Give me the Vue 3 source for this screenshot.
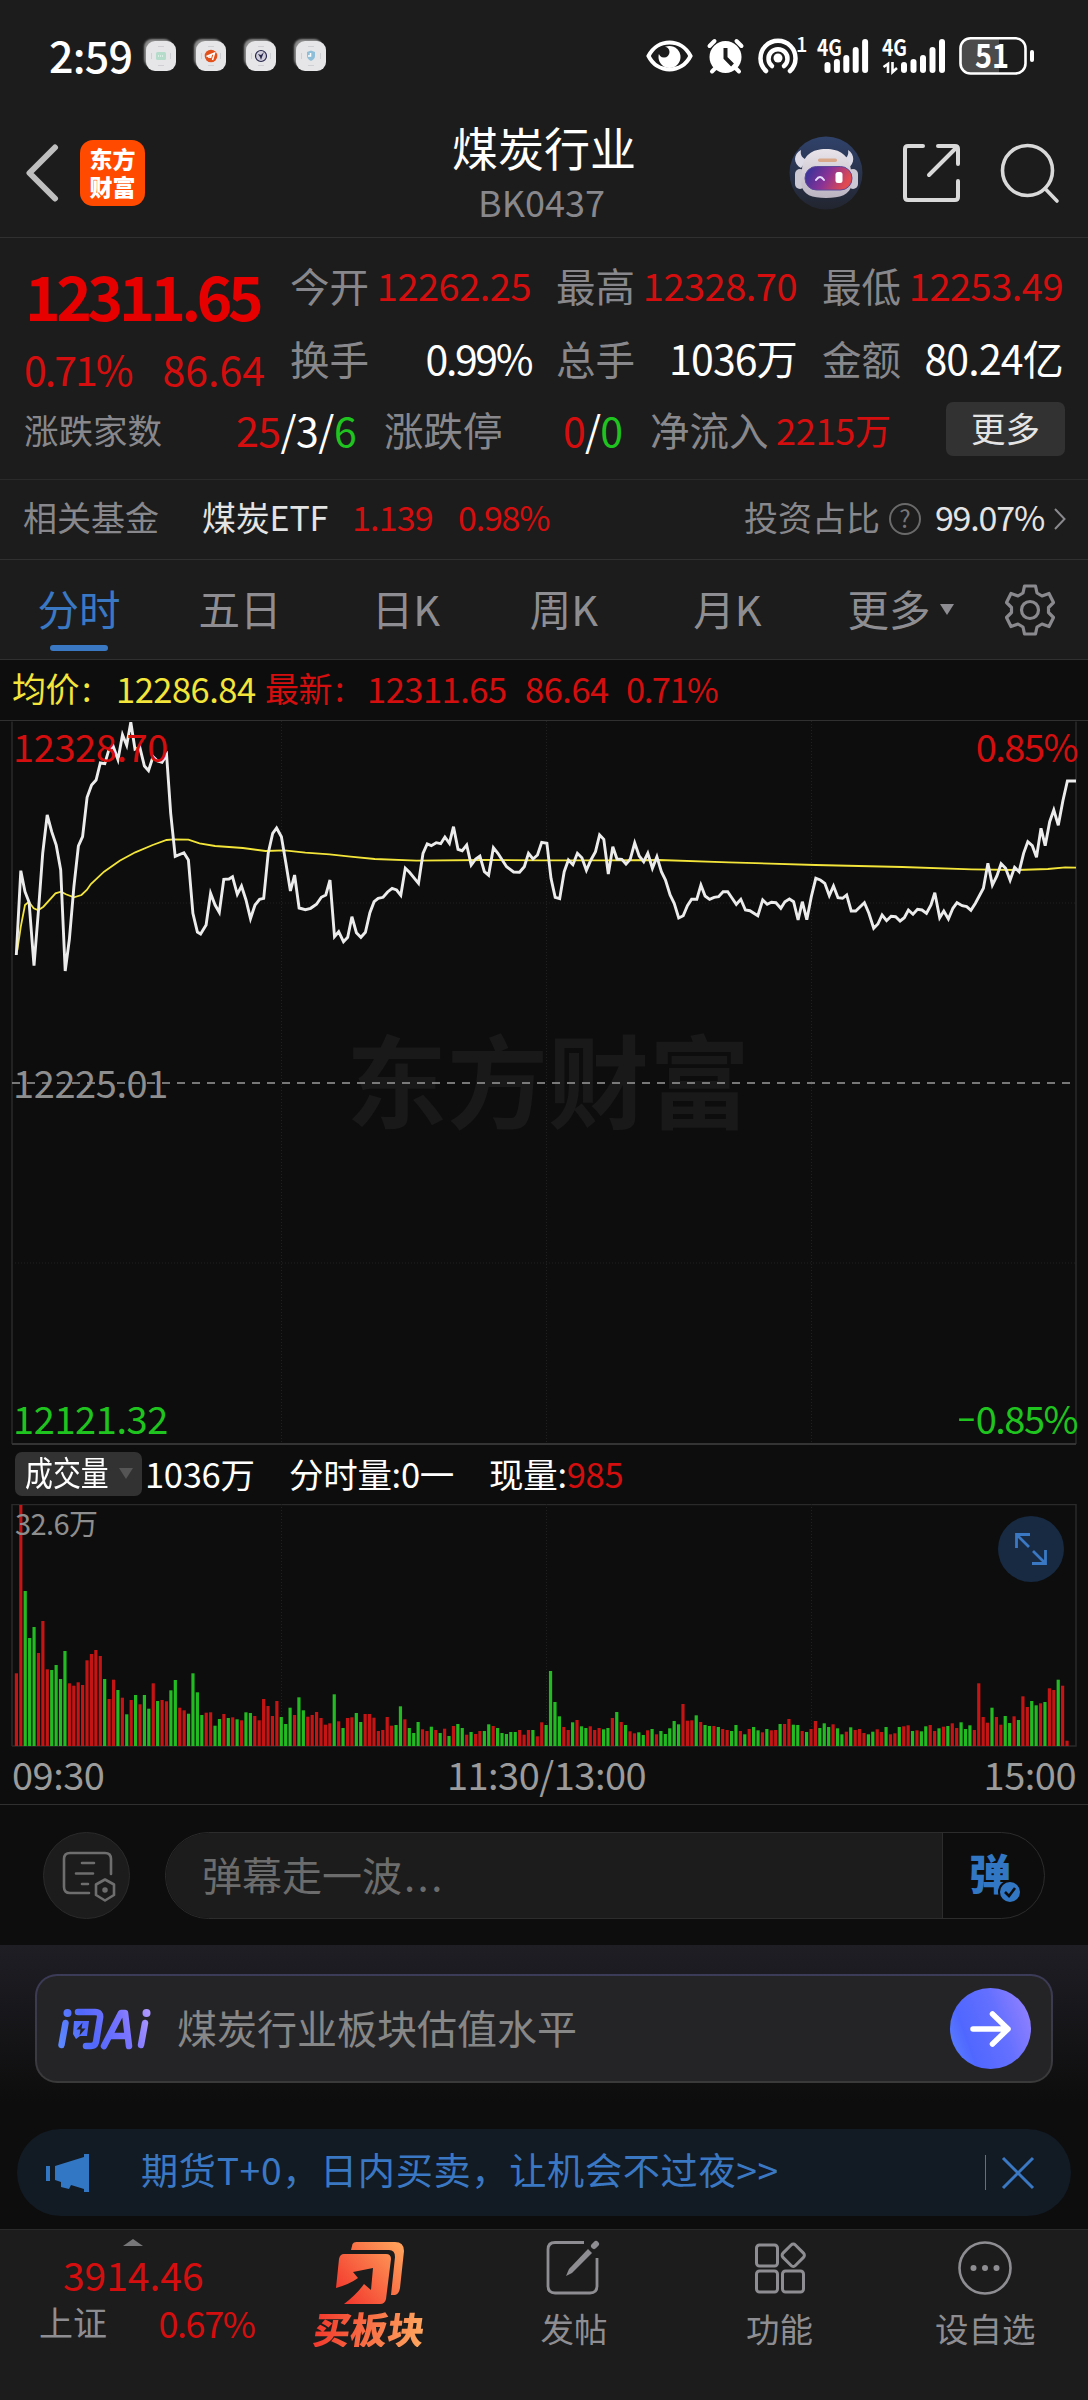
<template>
  <div class="page">
    <!-- system status bar -->
    <div class="status-bar">
      <span class="clock">2:59</span>
      <div class="notices">
        <span v-for="n in notices" :key="n" class="notice">
          <svg viewBox="0 0 30 30" width="30" height="30">
            <path d="M12 5.500h6M12 24.500h6M5.500 12v6M24.500 12v6" stroke="#cfd0d4" stroke-width="1" />
            <template v-if="n === 'chat'">
              <rect x="10" y="11" width="10" height="8" rx="1.500" fill="#b5dccb" />
              <path d="M12 15h6" stroke="#fff" stroke-width="1" stroke-dasharray="1 1" />
            </template>
            <template v-else-if="n === 'quote'">
              <circle cx="15" cy="15" r="6.300" fill="#e2501c" />
              <path d="M10.500 15.500l8-3.500-2 7M13 14v3M15.500 13l-1 4" stroke="#fff" stroke-width="1.500" fill="none" />
            </template>
            <template v-else-if="n === 'compass'">
              <circle cx="15" cy="15" r="5.500" fill="#d0cddb" stroke="#25264a" stroke-width="1.200" />
              <path d="M12 13l3 1 3-3-2 5-1 3-1-3z" fill="#25264a" />
            </template>
            <template v-else>
              <path d="M11 11l4-1.500 4 1.500v4q0 3-4 5-4-2-4-5z" fill="#8fbfd8" />
              <path d="M12 15h2.500v-3" stroke="#fff" stroke-width="1.500" fill="none" />
            </template>
          </svg>
        </span>
      </div>
      <svg class="status-icons" width="396" height="64" viewBox="642 24 396 64" fill="none" stroke="#fff">
        <path d="M648.500 56c9-18 33-18 42 0-9 18-33 18-42 0z" stroke-width="4" />
        <circle cx="669.500" cy="57" r="11" fill="#fff" stroke="none" />
        <circle cx="664" cy="52" r="5.500" fill="#1c1c1c" stroke="none" />
        <circle cx="725.500" cy="57" r="16" fill="#fff" stroke="none" />
        <path d="M725.500 48v10l7 7" stroke="#1c1c1c" stroke-width="4" />
        <path d="M709.500 46l5-5M741.500 46l-5-5M712 71.500l4-4M739 71.500l-4-4" stroke-width="4" stroke-linecap="round" />
        <path d="M766 71a17.500 17.500 0 1 1 24 0" stroke-width="4.500" stroke-linecap="round" />
        <path d="M772 66a9.500 9.500 0 1 1 12 0" stroke-width="4.500" stroke-linecap="round" />
        <circle cx="778" cy="58" r="4.500" fill="#fff" stroke="none" />
        <g stroke-width="6" stroke-linecap="round">
          <path v-for="(b, i) in signal" :key="'a' + i" :d="`M${827.5 + i * 9.4} ${b}V70`" />
          <path v-for="(b, i) in signal" :key="'b' + i" :d="`M${904 + i * 9.5} ${b}V70`" />
        </g>
        <path d="M883.500 67l4.500-3v9M897 68l-4.500 4v-10" stroke-width="2.600" />
        <g class="svg-text" fill="#fff" stroke="none">
          <text x="796" y="52" font-size="20" font-weight="500">1</text>
          <text x="817" y="56" font-size="23" font-weight="700" textLength="25" lengthAdjust="spacingAndGlyphs">4G</text>
          <text x="882" y="56" font-size="23" font-weight="700" textLength="25" lengthAdjust="spacingAndGlyphs">4G</text>
        </g>
        <path d="M970 39h29v34h-29q-9 0-9-9v-16q0-9 9-9z" fill="#4b4b4b" stroke="none" />
        <rect x="960.500" y="38.200" width="65" height="35.300" rx="10" stroke-width="2.600" />
        <path d="M1032 52v8" stroke-width="4" stroke-linecap="round" />
        <text class="svg-text" x="975" y="68" font-size="33" font-weight="700" fill="#fff" stroke="none" textLength="34" lengthAdjust="spacingAndGlyphs">51</text>
      </svg>
    </div>

    <header class="nav">
      <svg class="back" width="34" height="60" viewBox="0 0 34 60">
        <path d="M30 4.500L4.500 30 30 55.500" fill="none" stroke="#bfbfbf" stroke-width="6" stroke-linecap="round" stroke-linejoin="round" />
      </svg>
      <div class="brand"><span>东方</span><span>财富</span></div>
      <div class="title">
        <h1>煤炭行业</h1>
        <p>BK0437</p>
      </div>
      <svg class="robot" width="74" height="74" viewBox="0 0 74 74">
        <defs>
          <linearGradient id="robotBg" x1="0" y1="0" x2="0" y2="1">
            <stop offset="0" stop-color="#30426b" />
            <stop offset="1" stop-color="#22252f" />
          </linearGradient>
          <linearGradient id="visor" x1="0" y1="0" x2="1" y2="0.300">
            <stop offset="0" stop-color="#28349a" />
            <stop offset="0.550" stop-color="#8a3296" />
            <stop offset="1" stop-color="#e04a50" />
          </linearGradient>
          <linearGradient id="helmet" x1="0" y1="0" x2="0" y2="1">
            <stop offset="0" stop-color="#e9e4ea" />
            <stop offset="1" stop-color="#b9b4c0" />
          </linearGradient>
        </defs>
        <circle cx="37" cy="37" r="36.500" fill="url(#robotBg)" />
        <path d="M12 14c-8 4-8 14 0 18l6-8c-5-2-7-5-6-10zM59 14c7 4 7 14 0 18l-6-8c5-2 7-5 6-10z" fill="#dcdbe6" />
        <rect x="6" y="33" width="10" height="20" rx="5" fill="#cdc9d4" />
        <rect x="59" y="33" width="10" height="20" rx="5" fill="#cdc9d4" />
        <path d="M13 34c1-15 10-21 24-21s23 6 25 21l1 14c-2 11-12 14-26 14s-23-3-25-14z" fill="url(#helmet)" />
        <rect x="16" y="30.500" width="47" height="23.500" rx="11.500" fill="url(#visor)" stroke="#5b4a9b" />
        <rect x="29" y="22.500" width="19" height="3.500" rx="1.700" fill="#d9a789" />
        <path d="M27 44q4-6 8 0" fill="none" stroke="#e6dcff" stroke-width="2" stroke-linecap="round" />
        <rect x="46.500" y="36" width="7" height="11" rx="2.500" fill="#fff" />
      </svg>
      <svg class="share" width="60" height="62" viewBox="0 0 60 62" fill="none" stroke="#d9d9d9" stroke-width="4" stroke-linecap="round">
        <path d="M22 4H7Q4 4 4 7v48q0 3 3 3h47q3 0 3-3V39" />
        <path d="M37 4h17q3 0 3 3v15M56 5L28 33" />
      </svg>
      <svg class="search" width="62" height="62" viewBox="0 0 62 62" fill="none" stroke="#d9d9d9" stroke-width="3.600" stroke-linecap="round">
        <circle cx="28.500" cy="28.500" r="25" />
        <path d="M46 46.500l12 12.500" />
      </svg>
    </header>

    <section class="quote">
      <div class="quote-top">
        <div class="price-col">
          <div class="price">12311.65</div>
          <div class="change"><span class="rate">0.71%</span><span>86.64</span></div>
        </div>
        <div class="stats">
          <div v-for="s in stats" :key="s.label" class="stat">
            <span class="label">{{ s.label }}</span>
            <span :class="['value', s.cls]">{{ s.value }}</span>
          </div>
        </div>
      </div>
      <div class="quote-bottom">
        <span class="label l1">涨跌家数</span>
        <span class="n n1"><i class="up">25</i>/3/<i class="down">6</i></span>
        <span class="label l2">涨跌停</span>
        <span class="n n2"><i class="up">0</i>/<i class="down">0</i></span>
        <span class="label l3">净流入</span>
        <span class="n3 up">2215万</span>
        <button class="more">更多</button>
      </div>
    </section>

    <section class="fund">
      <span class="label">相关基金</span>
      <span class="fund-name">煤炭ETF</span>
      <span class="fund-price up">1.139</span>
      <span class="fund-rate up">0.98%</span>
      <span class="label ratio">投资占比</span>
      <span class="help">?</span>
      <span class="fund-share">99.07%</span>
      <svg width="14" height="24" viewBox="0 0 14 24"><path d="M2 2l9.500 10L2 22" fill="none" stroke="#8a8a8e" stroke-width="2" /></svg>
    </section>

    <nav class="tabs">
      <span v-for="(t, i) in tabs" :key="t" :class="['tab', { active: i === 0 }]">{{ t }}</span>
      <span class="tab tab-more">更多<i class="caret"></i></span>
      <span class="tab">
        <svg width="50" height="52" viewBox="-25 -26 50 52" fill="none" stroke="#8a8a8e" stroke-width="3.200" stroke-linejoin="round">
          <path d="M-5.500-24h11l1.500 7 5 3 7-2.500 4.500 9-5 5v5l5 5-4.500 9-7-2.500-5 3-1.500 7h-11l-1.500-7-5-3-7 2.500-4.500-9 5-5v-5l-5-5 4.500-9 7 2.500 5-3z" />
          <circle r="8.500" />
        </svg>
      </span>
    </nav>

    <div class="summary">
      <span class="avg">均价<i class="colon">:</i></span><span class="avg avg-value">12286.84</span>
      <span class="up last">最新<i class="colon">:</i></span><span class="up last-value">12311.65</span>
      <span class="up diff">86.64</span><span class="up rate">0.71%</span>
    </div>

    <div class="chart">
      <svg width="1088" height="724" viewBox="0 0 1088 724" fill="none">
        <text class="svg-text" x="548" y="400" font-size="101" font-weight="700" fill="#191919" text-anchor="middle">东方财富</text>
        <path d="M12 0.500V723M1076 0.500V723" stroke="#2a2a2a" stroke-width="1.500" />
        <path d="M12 723H1076" stroke="#343434" stroke-width="2" />
        <path d="M281.500 0V723M546.500 0V723M811.500 0V723M12 182H1076M12 542H1076" stroke="#202020" stroke-dasharray="1 2" />
        <path d="M12 362H1076" stroke="#9a9a9a" stroke-width="1.600" stroke-dasharray="8 7" />
        <polyline :points="avgPoints" stroke="#f3e53a" stroke-width="1.800" />
        <polyline :points="pricePoints" stroke="#ececec" stroke-width="2.900" />
      </svg>
      <span class="mark tl up">12328.70</span>
      <span class="mark tr up">0.85%</span>
      <span class="mark ml">12225.01</span>
      <span class="mark bl down">12121.32</span>
      <span class="mark br down"><i class="minus">−</i>0.85%</span>
    </div>

    <div class="volume-head">
      <button class="indicator"><span>成交量</span><i class="caret dim"></i></button>
      <span class="v1">1036万</span>
      <span class="v2">分时量:0一</span>
      <span class="v3">现量:<i class="up">985</i></span>
    </div>

    <div class="volume">
      <svg width="1088" height="243" viewBox="0 0 1088 243" fill="none">
        <path d="M12 242V0.500H1076V242H12" stroke="#2a2a2a" stroke-width="1.500" />
        <path d="M281.500 0V242M546.500 0V242M811.500 0V242" stroke="#202020" stroke-dasharray="1 2" />
        <rect v-for="(b, i) in bars" :key="i" :x="b.x" :y="b.y" width="3.200" :height="b.h" :fill="b.color" />
      </svg>
      <span class="vol-max">32.6万</span>
      <span class="expand">
        <svg width="34" height="34" viewBox="0 0 34 34" fill="none" stroke="#3a78c3" stroke-width="2.800">
          <path d="M16 2.500H2.500V16M3 3l12 12M18 31.500h13.500V18M31 31L19 19" />
        </svg>
      </span>
    </div>

    <div class="axis"><span>09:30</span><span class="noon">11:30/13:00</span><span>15:00</span></div>

    <div class="danmu">
      <span class="danmu-set">
        <svg width="54" height="52" viewBox="0 0 54 52" fill="none" stroke="#6e6e6e" stroke-width="2.600" stroke-linecap="round">
          <path d="M27 42H8q-6 0-6-6V8q0-6 6-6h35q6 0 6 6v15" />
          <path d="M20 12h12M14 22.500h17M20 33h6" />
          <path d="M43 28.500l9 5v10.500l-9 5.500-9-5.500V33.500z" stroke-linejoin="round" />
          <circle cx="43" cy="39" r="2" fill="#6e6e6e" stroke-width="1.500" />
        </svg>
      </span>
      <div class="danmu-box">
        <span class="danmu-input">弹幕走一波<i class="dots">...</i></span>
        <span class="danmu-toggle">
          <b>弹</b>
          <svg width="24" height="24" viewBox="0 0 24 24">
            <circle cx="12" cy="12" r="11" fill="#3277c4" stroke="#0d0d0d" stroke-width="2" />
            <path d="M7 12l4 4 6-8" fill="none" stroke="#0d0d0d" stroke-width="2.600" />
          </svg>
        </span>
      </div>
    </div>

    <section class="ask">
      <div class="ask-card">
        <svg class="ask-logo" width="94" height="44" viewBox="0 0 94 44" fill="none">
          <defs>
            <linearGradient id="ai" gradientUnits="userSpaceOnUse" x1="0" y1="40" x2="94" y2="4">
              <stop offset="0" stop-color="#5f8cff" />
              <stop offset="0.350" stop-color="#5168fb" />
              <stop offset="0.700" stop-color="#7a74ff" />
              <stop offset="1" stop-color="#b29aff" />
            </linearGradient>
          </defs>
          <g stroke="url(#ai)" stroke-width="6.500" stroke-linecap="round" stroke-linejoin="round">
            <path d="M8.500 16L4.500 38" />
            <path d="M21 5h17q6 0 5 6l-4 24q-1 4-5 4h-5" />
            <path d="M47 39L64 6h4l4 33M55 29h14" />
            <path d="M88 16l-4 22" />
          </g>
          <circle cx="10.500" cy="6" r="4" fill="url(#ai)" />
          <circle cx="89.500" cy="6" r="4" fill="url(#ai)" />
          <path d="M17 14h15l-2 15h-7l-4 3-3-5z" fill="url(#ai)" />
          <path d="M25.500 15.500l-6 7h4l-1 6 6-7h-4z" fill="#242426" />
        </svg>
        <span class="ask-text">煤炭行业板块估值水平</span>
        <span class="ask-go">
          <svg width="42" height="38" viewBox="0 0 42 38"><path d="M3 19h35M22.500 4L38 19 22.500 34" fill="none" stroke="#fff" stroke-width="5.500" stroke-linecap="round" stroke-linejoin="round" /></svg>
        </span>
      </div>
    </section>

    <div class="banner">
      <svg width="44" height="40" viewBox="0 0 44 40" fill="#3277c4">
        <path d="M0 13h4v15H0zM9 13L38 4V1h5v38h-5v-3l-13-4-2 4-8-2v-5l-6-2z" />
      </svg>
      <span class="banner-text">期货T+0，日内买卖，让机会不过夜&gt;&gt;</span>
      <i class="rule"></i>
      <svg width="34" height="34" viewBox="0 0 34 34"><path d="M2 2l30 30M32 2L2 32" stroke="#3a78c3" stroke-width="3" /></svg>
    </div>

    <footer class="bottom">
      <div class="index">
        <i class="caret-up"></i>
        <div class="index-value up">3914.46</div>
        <div class="index-row"><span>上证</span><span class="up">0.67%</span></div>
      </div>
      <div class="action buy">
        <svg width="70" height="66" viewBox="0 0 70 66">
          <defs>
            <linearGradient id="buy" gradientUnits="userSpaceOnUse" x1="6" y1="60" x2="66" y2="8">
              <stop offset="0" stop-color="#f2352c" />
              <stop offset="1" stop-color="#ff9f5a" />
            </linearGradient>
          </defs>
          <path d="M16 9l1.500-6q1-2 4-2H60q9 0 9 9l-4 37q-1 6-5 7h-4l4-38q0-7-6-7z" fill="url(#buy)" />
          <path d="M9 13h42q5 0 5 5l-5 40q-1 5-6 5H9q13-10 20-20l7 6 2-22-20 4 5 6Q15 43 1 47l3-29q1-5 5-5z" fill="url(#buy)" />
        </svg>
        <span>买板块</span>
      </div>
      <div class="action">
        <svg width="56" height="56" viewBox="0 0 56 56" fill="none" stroke="#8e8e92" stroke-width="2.800">
          <path d="M38 2.500H9q-7 0-7 7V46q0 7 7 7h35q7 0 7-7V18" />
          <path d="M20 36l3-7L42 9l4 4-20 20z" fill="#8e8e92" stroke="none" />
          <path d="M48 6l2-2" stroke-width="6" stroke-linecap="round" />
        </svg>
        <span>发帖</span>
      </div>
      <div class="action">
        <svg width="56" height="56" viewBox="0 0 56 56" fill="none" stroke="#8e8e92" stroke-width="3">
          <rect x="4.500" y="5" width="21" height="21" rx="3" />
          <rect x="4.500" y="31" width="21" height="21" rx="3" />
          <rect x="30.500" y="31" width="21" height="21" rx="3" />
          <rect x="32.500" y="6.500" width="17.500" height="17.500" rx="3" transform="rotate(45 41.250 15.250)" />
        </svg>
        <span>功能</span>
      </div>
      <div class="action">
        <svg width="56" height="56" viewBox="0 0 56 56">
          <circle cx="28" cy="28" r="25.500" fill="none" stroke="#8e8e92" stroke-width="2.600" />
          <circle v-for="x in [16.5, 28, 39.5]" :key="x" :cx="x" cy="28" r="3" fill="#8e8e92" />
        </svg>
        <span>设自选</span>
      </div>
    </footer>
  </div>
</template>

<script setup>
const notices = ['chat', 'quote', 'compass', 'shield'];
const signal = [65, 62, 58, 50, 42];

const stats = [
  { label: '今开', value: '12262.25', cls: 'up small' },
  { label: '最高', value: '12328.70', cls: 'up small' },
  { label: '最低', value: '12253.49', cls: 'up small' },
  { label: '换手', value: '0.99%', cls: 'percent' },
  { label: '总手', value: '1036万', cls: '' },
  { label: '金额', value: '80.24亿', cls: '' }
];

const tabs = ['分时', '五日', '日K', '周K', '月K'];

const SX = 0.347;
const SY = 1 / 3;
const price = '47,1185 60,932 72,995 84,1027 98,1217 111,1050 123,880 136,765 149,815 162,855 175,930 188,1233 200,1137 213,980 226,858 238,830 251,712 264,675 277,660 289,609 302,611 313,572 326,558 340,599 353,524 365,556 377,487 389,568 403,562 416,618 428,632 441,590 454,603 467,607 480,585 492,760 505,889 530,878 543,900 556,1060 569,1116 578,1122 594,1095 607,1000 620,1035 632,1057 645,958 660,957 670,950 684,1003 696,978 709,1020 722,1076 735,1035 748,1018 760,1015 773,880 786,820 797,804 811,830 824,910 837,993 849,945 862,1044 880,1049 895,1045 912,1033 926,1012 939,1005 951,960 964,1130 976,1115 990,1145 1002,1132 1014,1070 1027,1118 1040,1132 1053,1117 1066,1058 1078,1025 1090,1015 1104,1012 1117,996 1130,985 1143,990 1155,1006 1168,925 1180,937 1206,970 1219,880 1231,852 1243,857 1257,848 1270,851 1282,831 1295,850 1307,800 1320,868 1332,872 1345,855 1358,915 1371,897 1383,888 1396,935 1408,946 1422,863 1435,880 1460,920 1480,936 1497,937 1511,920 1523,880 1536,897 1549,885 1561,847 1576,850 1588,955 1600,1012 1613,1016 1626,935 1638,900 1651,914 1664,880 1677,893 1690,931 1703,900 1716,875 1728,825 1740,838 1753,942 1766,860 1778,897 1792,898 1804,912 1816,898 1829,849 1842,888 1855,905 1867,880 1880,925 1893,890 1906,935 1918,960 1931,1005 1943,1030 1956,1074 1969,1067 1981,1037 1993,1018 2008,1018 2020,975 2032,1008 2045,1018 2058,1012 2071,1010 2084,995 2097,995 2109,1013 2122,1033 2135,1018 2148,1050 2161,1052 2184,1067 2198,1020 2211,1033 2223,1027 2236,1028 2250,1045 2262,1025 2275,1017 2287,1025 2300,1080 2312,1025 2325,1079 2338,1010 2351,955 2364,960 2377,970 2390,1007 2402,978 2415,1013 2428,1015 2440,1005 2453,1053 2466,1053 2491,1028 2504,1060 2518,1105 2530,1092 2542,1065 2555,1082 2568,1069 2581,1070 2594,1083 2606,1073 2618,1050 2631,1063 2644,1048 2657,1050 2670,1060 2683,1035 2694,998 2708,1073 2720,1053 2733,1077 2746,1045 2758,1028 2773,1037 2786,1040 2798,1051 2811,1030 2834,985 2847,910 2860,975 2873,948 2885,911 2898,925 2911,961 2924,922 2937,935 2950,880 2962,845 2975,857 2987,892 3000,805 3012,857 3025,785 3037,750 3050,796 3063,722 3076,663 3101,663';
const average = '50,1170 60,1100 72,1035 83,1025 97,1045 110,1051 125,1040 160,1000 176,995 190,1003 213,1012 235,1005 250,990 262,972 300,935 345,902 390,877 440,855 480,840 500,838 543,839 575,850 620,858 700,864 765,873 820,871 880,878 950,883 1010,890 1080,897 1200,902 1400,900 1560,901 1740,901 1900,900 2100,907 2350,915 2600,921 2800,928 2930,930 3020,927 3070,922 3101,923';

const toPoints = (str) =>
  str
    .split(' ')
    .map((p) => {
      const [x, y] = p.split(',').map(Number);
      return `${(x * SX).toFixed(1)},${((y - 483) * SY).toFixed(1)}`;
    })
    .join(' ');

const pricePoints = toPoints(price);
const avgPoints = toPoints(average);

// one bar per minute, r = up, g = down, number = top edge
const VOL_BASE = 1038;
const volume = 'r820 r315 g573 g714 g681 r759 r663 r808 g810 g795 g837 g753 r850 r857 r847 r855 r781 r762 r750 r768 g837 r897 r839 g870 r893 g943 r900 g885 r913 g885 g926 r850 g903 r900 r904 g871 g840 r923 r931 g941 g820 g877 g945 r938 r937 g977 g957 r942 g954 r952 g958 r961 g937 g939 r948 r961 r897 r918 r948 r903 g951 g972 g923 r945 g892 g931 r950 r945 r936 r954 r974 r970 g883 r964 g984 r954 r952 g939 g966 r942 r942 r953 r993 r990 r951 r977 g975 g919 r958 g984 g999 g966 r988 r993 g980 r990 g999 r986 g1008 r978 g972 g984 r1004 g996 r1002 r993 g993 g973 r978 g984 g999 g1002 g996 g996 r990 r1004 r990 g990 r1009 r967 g975 g813 g906 g949 r981 r990 g967 r960 g979 g984 r979 r990 r984 g988 g984 r954 g936 r966 g975 r994 r1000 g997 g1005 r991 g987 r1003 g993 g1002 g985 g963 g973 r912 r962 r961 g946 r966 g975 g978 r978 g981 r987 r990 g993 g975 r993 g1003 r987 g981 g991 r997 g987 r991 r990 g972 r972 r957 g974 g975 r993 g996 r987 r963 g984 g970 g981 r973 g985 g1003 r995 g982 r990 r987 r999 g1003 g995 r988 r996 g981 r1003 r1000 g981 r979 r976 g993 r991 g994 g979 r975 r993 g985 r980 g978 r970 r984 g967 g987 g976 r990 r850 r951 r968 g923 r951 r974 g948 g969 r949 g960 r889 r921 g903 g916 r910 g906 r865 r870 g839 r857 r1022';

const bars = volume.split(' ').map((v, i) => {
  const h = (VOL_BASE - Number(v.slice(1))) * SY;
  return {
    x: (14.8 + i * 4.4145).toFixed(2),
    y: (242 - h).toFixed(1),
    h: h.toFixed(1),
    color: v[0] === 'r' ? '#c41414' : '#22bb22'
  };
});
</script>

<style>
body {
  background: #0d0d0d;
}
</style>

<style scoped>
.page,
.page * {
  box-sizing: border-box;
}

.page {
  width: 1088px;
  height: 2400px;
  overflow: hidden;
  background: #0d0d0d;
  color: #fff;
  font-family: "Noto Sans CJK SC", "Noto Sans", sans-serif;
  line-height: 1;
  white-space: nowrap;
}

.page svg {
  display: block;
  flex: none;
}

.page i {
  font-style: normal;
}

.page button {
  border: 0;
  font-family: inherit;
  color: inherit;
  line-height: 1;
}

.svg-text {
  font-family: "Noto Sans CJK SC", sans-serif;
}

.up { color: #d40e0e; }
.down { color: #1fc41f; }
.label { color: #88888c; }

/* status bar */
.status-bar {
  display: flex;
  height: 112px;
  padding: 24px 50px 0 49px;
  background: #1c1c1c;
}

.clock {
  width: 97px;
  padding-top: 10px;
  font-size: 43px;
  font-weight: 500;
  line-height: 40px;
  letter-spacing: -0.8px;
}

.notices {
  display: flex;
  gap: 20px;
  padding-top: 17px;
}

.notice {
  width: 30px;
  height: 30px;
  border-radius: 9px;
  background: #e6e6e9;
  box-shadow: -3px -3px 2px -1px #8d8d8d;
}

.status-icons {
  margin-left: auto;
}

/* header */
.nav {
  display: flex;
  align-items: center;
  position: relative;
  height: 126px;
  padding: 0 27px 4px 25px;
  background: #1c1c1c;
  border-bottom: 1px solid #303030;
}

.brand {
  display: flex;
  flex-direction: column;
  align-items: center;
  width: 65px;
  height: 66px;
  margin-left: 21px;
  padding-top: 4px;
  border-radius: 13px;
  background: #ff4a00;
  font-size: 23px;
  font-weight: 900;
  line-height: 28px;
}

.title {
  position: absolute;
  left: 0;
  right: 0;
  top: 11px;
  text-align: center;
}

.title h1 {
  margin: 0;
  font-size: 46px;
  font-weight: 400;
  line-height: 46px;
}

.title p {
  margin: 14px 0 0;
  padding-right: 5px;
  color: #88888c;
  font-size: 36px;
  line-height: 36px;
}

.robot { margin-left: auto; }
.share { margin-left: 38px; }
.search { margin-left: 38px; }

/* quote */
.quote {
  height: 242px;
  background: #1c1c1c;
  border-bottom: 1px solid #2a2a2a;
}

.quote-top {
  display: flex;
  height: 156px;
  padding: 10px 25px 0 24px;
}

.price-col {
  width: 267px;
}

.price {
  height: 76px;
  padding-top: 9px;
  padding-left: 1px;
  color: #e60000;
  font-size: 60.500px;
  font-weight: 700;
  letter-spacing: -4.400px;
  line-height: 76px;
}

.change {
  display: flex;
  justify-content: space-between;
  padding-right: 25px;
  color: #d40e0e;
  font-size: 41px;
  line-height: 88px;
}

.change .rate { letter-spacing: -2px; }

.stats {
  display: grid;
  grid-template-columns: repeat(3, 241px);
  grid-auto-rows: 73px;
  column-gap: 25px;
}

.stat {
  display: flex;
  align-items: center;
  justify-content: space-between;
}

.stat .label {
  font-size: 39.500px;
}

.value {
  font-size: 41px;
  letter-spacing: -0.800px;
}

.value.percent { letter-spacing: -2.400px; }

.value.small {
  font-size: 38px;
  letter-spacing: -0.500px;
}

.quote-bottom {
  display: flex;
  align-items: center;
  height: 70px;
  padding: 0 23px 0 24px;
}

.l1 { width: 212px; font-size: 34.500px; }
.l2, .l3 { font-size: 39.500px; }
.n { font-size: 41px; }
.n1 { width: 148px; letter-spacing: -0.500px; }
.l2 { width: 179px; }
.n2 { width: 87px; letter-spacing: -0.800px; }
.l3 { width: 126px; }
.n3 { font-size: 36px; letter-spacing: -0.200px; }

.more {
  width: 119px;
  height: 54px;
  margin-left: auto;
  padding: 0 0 4px;
  border-radius: 7px;
  background: #323232;
  font-size: 34.500px;
}

.page .more { color: #e4e4e4; }

/* related fund */
.fund {
  display: flex;
  align-items: center;
  height: 80px;
  padding: 0 21px 5px 23px;
  background: #1c1c1c;
  border-bottom: 1px solid #303030;
  font-size: 34px;
}

.fund-name { width: 150px; margin-left: 43px; color: #e4e4e4; letter-spacing: -0.200px; }
.fund-price { width: 106px; letter-spacing: -0.800px; }
.fund-rate { letter-spacing: -1.200px; }
.ratio { margin-left: auto; }

.help {
  width: 32px;
  height: 32px;
  margin: 4px 14px 0 9px;
  border: 2px solid #6a6a6a;
  border-radius: 50%;
  color: #77777a;
  font-size: 24px;
  line-height: 25px;
  text-align: center;
}

.fund-share { color: #e4e4e4; letter-spacing: -1.200px; margin-right: 9px; }
.fund svg { margin-top: 4px; }

/* tabs */
.tabs {
  display: grid;
  grid-template-columns: 158px 164px 168px 148px 179px 167px 92px;
  height: 100px;
  padding-left: 0;
  background: #1c1c1c;
  border-bottom: 1px solid #303030;
  color: #8e8e92;
  font-size: 41.500px;
}

.tab {
  display: flex;
  flex-direction: column;
  align-items: center;
  padding-top: 28px;
}

.tab svg { margin-top: -4px; }

.tab.active { color: #3a78c3; }

.tab.active::after {
  content: "";
  width: 58px;
  height: 6px;
  margin-top: 15.500px;
  border-radius: 3px;
  background: #3a78c3;
}

.tab-more {
  flex-direction: row;
  align-items: flex-start;
  justify-content: center;
}

.caret {
  width: 0;
  height: 0;
  border: 7px solid transparent;
  border-top: 11px solid #8e8e92;
  border-bottom: 0;
}

.tab-more .caret { margin: 16px 0 0 9px; }

/* avg / last line */
.summary {
  display: flex;
  align-items: center;
  height: 61px;
  padding: 0 12px 4px;
  border-bottom: 1px solid #303030;
  font-size: 34.500px;
  letter-spacing: -0.500px;
}

.avg { color: #f3e53a; width: 104px; font-size: 34px; }
.avg-value { width: 149px; font-size: 34.500px; }
.last { width: 102px; font-size: 34px; }
.last-value { width: 158px; }
.diff { width: 101px; }
.colon { margin-left: 3px; }
.summary .rate { letter-spacing: -1.500px; }

/* price chart */
.chart {
  position: relative;
  height: 724px;
}

.mark {
  position: absolute;
  font-size: 38px;
  letter-spacing: -0.400px;
}

.tl { left: 13px; top: 6px; }
.tr { right: 11px; top: 6px; letter-spacing: -1.500px; }
.ml { left: 13px; top: 342px; color: #8e8e8e; }
.bl { left: 13px; top: 678px; }
.br { right: 11px; top: 678px; letter-spacing: -1.500px; }
.minus { display: inline-block; transform: scaleX(0.8); }

/* volume */
.volume-head {
  display: flex;
  align-items: center;
  height: 59px;
  padding: 0 0 1px 15px;
}

.indicator {
  display: flex;
  align-items: center;
  justify-content: space-between;
  width: 127px;
  height: 44px;
  margin-right: 3px;
  padding: 0 9px 5px 10px;
  border-radius: 7px;
  background: #323232;
  font-size: 34px;
}

.indicator span {
  display: block;
  width: 84px;
  transform: scaleX(0.82);
  transform-origin: 0 50%;
}

.caret.dim { margin-top: 4px; border-top-color: #555; }

.v1, .v2, .v3 { padding-bottom: 2px; letter-spacing: -0.300px; font-size: 34.500px; }
.v1 { width: 144px; }
.v2 { width: 200px; }

.volume {
  position: relative;
  height: 243px;
}

.vol-max {
  position: absolute;
  left: 15px;
  top: 4px;
  color: #8e8e8e;
  font-size: 29px;
  letter-spacing: -0.600px;
}

.expand {
  position: absolute;
  right: 24px;
  top: 12px;
  display: flex;
  align-items: center;
  justify-content: center;
  width: 66px;
  height: 66px;
  border-radius: 50%;
  background: #172a42;
}

.axis {
  display: flex;
  justify-content: space-between;
  height: 58px;
  padding: 8px 12px 0;
  border-bottom: 1px solid #303030;
  color: #9b9b9b;
  font-size: 38px;
  letter-spacing: -0.500px;
}

.noon { padding-left: 5px; }

/* comments */
.danmu {
  display: flex;
  align-items: flex-start;
  height: 140px;
  padding: 27px 43px 0;
}

.danmu-set {
  display: flex;
  align-items: center;
  justify-content: center;
  width: 87px;
  height: 87px;
  margin-right: 35px;
  padding-left: 4px;
  padding-top: 2px;
  border: 1px solid #2a2a2a;
  border-radius: 50%;
  background: #1c1c1c;
}

.danmu-box {
  display: flex;
  flex: 1;
  height: 87px;
  border: 1px solid #2c2c2c;
  border-radius: 44px;
  overflow: hidden;
}

.danmu-input {
  flex: 1;
  padding: 21px 0 0 36px;
  border-right: 1px solid #2c2c2c;
  background: #1c1c1c;
  color: #6c6c6c;
  font-size: 40px;
}

.dots { margin-left: 2px; letter-spacing: 2.500px; }

.danmu-toggle {
  display: flex;
  width: 101px;
  padding: 18px 0 0 26px;
  color: #3277c4;
  font-size: 42px;
}

.danmu-toggle b { width: 29px; font-weight: 900; }
.danmu-toggle svg { position: relative; top: 29px; }

/* ask */
.ask {
  height: 184px;
  padding: 29px 35px 0;
  background: linear-gradient(#1f1e25, #0d0d0d 85%);
}

.ask-card {
  display: flex;
  align-items: center;
  height: 109px;
  padding: 0 20px;
  border: 2px solid transparent;
  border-radius: 22px;
  background: linear-gradient(#242426, #242426) padding-box, linear-gradient(#3c3b58, #3a3a3a) border-box;
}

.ask-text {
  margin-left: 26px;
  padding-bottom: 3px;
  color: #878787;
  font-size: 40px;
}

.ask-go {
  display: flex;
  align-items: center;
  justify-content: center;
  width: 81px;
  height: 81px;
  margin-left: auto;
  border-radius: 50%;
  background: linear-gradient(70deg, #5b86ff, #5067ff 25%, #6470ff 60%, #9b84ff);
}

/* banner */
.banner {
  display: flex;
  align-items: center;
  height: 87px;
  margin: 0 17px;
  padding: 0 36px 0 29px;
  border-radius: 44px;
  background: #121a23;
}

.banner-text {
  margin: 0 auto 5px 51px;
  color: #3a78c3;
  font-size: 37.200px;
  letter-spacing: 0.650px;
}

.rule {
  width: 1px;
  height: 35px;
  margin-right: 15px;
  background: #3a78c3;
}

/* bottom bar */
.bottom {
  display: flex;
  height: 171px;
  margin-top: 13px;
  background: #1c1c1c;
  border-top: 1px solid #2a2a2a;
  color: #8e8e92;
}

.index {
  width: 267px;
  padding-top: 9px;
}

.caret-up {
  display: block;
  width: 0;
  margin: 0 auto;
  border: 10px solid transparent;
  border-top: 0;
  border-bottom: 7px solid #77777a;
}

.index-value {
  margin-top: 9px;
  font-size: 39px;
  text-align: center;
}

.index-row {
  display: flex;
  justify-content: space-between;
  align-items: center;
  padding: 10px 12px 0 39px;
  font-size: 34px;
}

.index-row .up { font-size: 36px; letter-spacing: -1.400px; }

.action {
  display: flex;
  flex-direction: column;
  align-items: center;
  width: 206px;
  padding-top: 10px;
  font-size: 33.500px;
}

.action span { margin-top: 15px; }

.buy { padding-top: 11px; padding-left: 2px; width: 205px; }

.buy span {
  margin-top: 3px;
  font-size: 37px;
  font-weight: 900;
  transform: skewX(-8deg);
  background: linear-gradient(90deg, #f2382c, #ffa860);
  -webkit-background-clip: text;
  background-clip: text;
  color: transparent;
}
</style>
